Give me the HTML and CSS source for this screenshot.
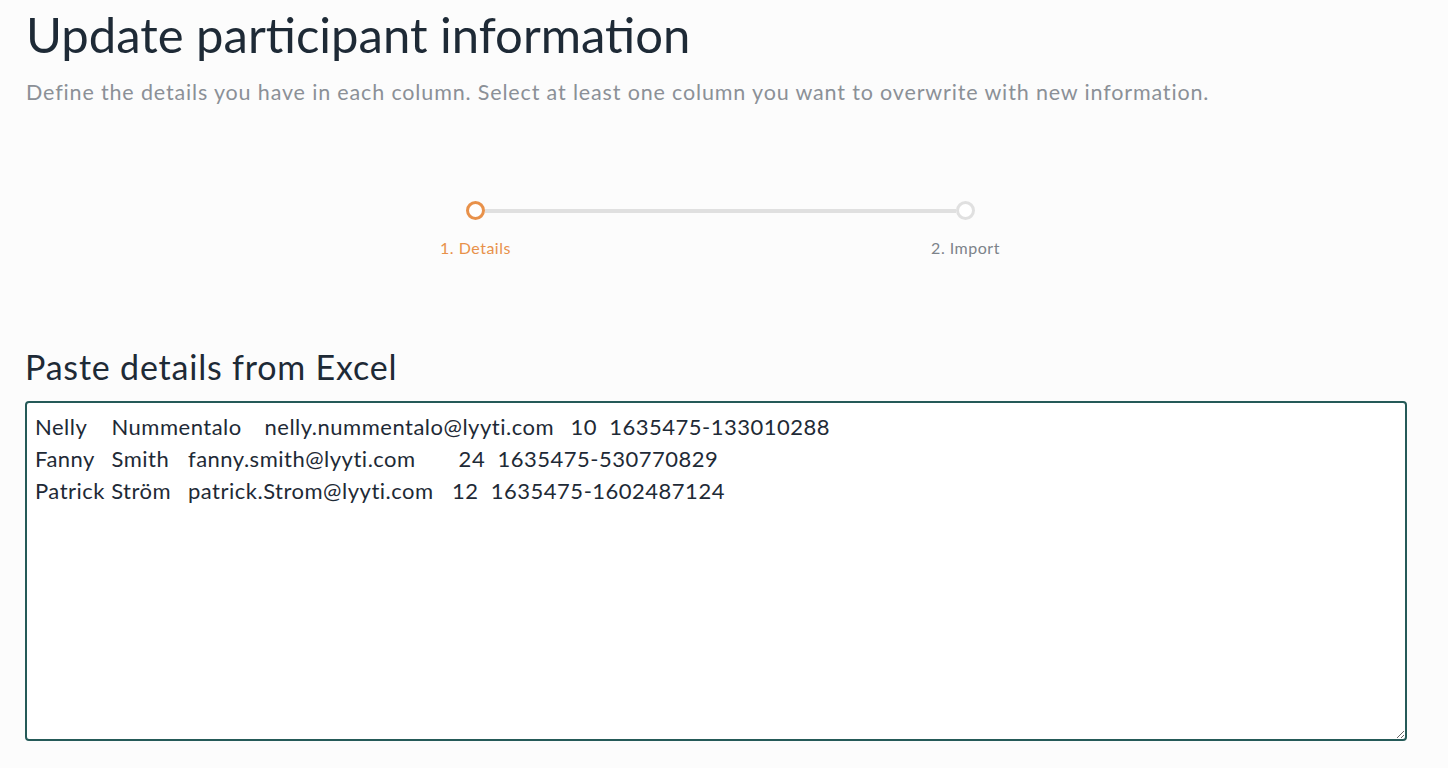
FILE: index.html
```html
<!DOCTYPE html>
<html lang="en">
<head>
<meta charset="utf-8">
<title>Update participant information</title>
<link rel="stylesheet" href="styles.css">
</head>
<body>
<main class="page">
  <h1 class="title">Update participant information</h1>
  <p class="subtitle">Define the details you have in each column. Select at least one column you want to overwrite with new information.</p>

  <div class="stepper">
    <div class="step">
      <span class="dot dot-active"></span>
      <span class="label label-active">1. Details</span>
    </div>
    <span class="line"></span>
    <div class="step">
      <span class="dot"></span>
      <span class="label">2. Import</span>
    </div>
  </div>

  <h2 class="section-title">Paste details from Excel</h2>
  <textarea class="paste" spellcheck="false">Nelly	Nummentalo	nelly.nummentalo@lyyti.com	10  1635475-133010288
Fanny	Smith	fanny.smith@lyyti.com       24  1635475-530770829
Patrick Ström	patrick.Strom@lyyti.com   12  1635475-1602487124</textarea>
</main>
</body>
</html>
```

FILE: styles.css
```css
html, body {
  margin: 0;
  padding: 0;
  background: #fcfcfc;
}
body {
  font-family: Lato, "Noto Sans", sans-serif;
  color: #1e2a36;
}
.page {
  padding: 0 41px 0 25px;
  display: flex;
  flex-direction: column;
}
.title {
  margin: 6px 0 0 1px;
  font-size: 49px;
  font-weight: 400;
  line-height: 56px;
  letter-spacing: 0;
}
.subtitle {
  margin: 16px 0 0 1px;
  font-size: 21.5px;
  line-height: 28px;
  letter-spacing: 0.85px;
  color: #8b9097;
}
.stepper {
  margin: 95px 0 0 441px;
  width: 509px;
  align-self: flex-start;
  display: flex;
  align-items: flex-start;
}
.step {
  width: 19px;
  display: flex;
  flex-direction: column;
  align-items: center;
  flex: none;
}
.dot {
  width: 19px;
  height: 19px;
  box-sizing: border-box;
  border: 3.5px solid #e0e0e0;
  border-radius: 50%;
  background: #fff;
  flex: none;
}
.dot-active {
  border-color: #e8914a;
}
.line {
  flex: 1;
  height: 4px;
  margin-top: 7.5px;
  background: #e0e0e0;
}
.label {
  margin-top: 17.5px;
  font-size: 16px;
  line-height: 20px;
  color: #7d838a;
  letter-spacing: 0.5px;
  white-space: nowrap;
}
.label-active {
  color: #e8914a;
}
.section-title {
  margin: 89px 0 0 0;
  font-size: 34px;
  font-weight: 400;
  line-height: 40px;
  letter-spacing: 0.8px;
}
.paste {
  margin-top: 14px;
  height: 340px;
  box-sizing: border-box;
  border: 2px solid #255a58;
  border-radius: 4px;
  background: #ffffff;
  padding: 8.5px 8px 7px;
  font-family: Lato, "Noto Sans", sans-serif;
  font-size: 22px;
  line-height: 32px;
  letter-spacing: 0.5px;
  color: #1e2a36;
  tab-size: 76.5px;
  resize: both;
  outline: none;
}
```
